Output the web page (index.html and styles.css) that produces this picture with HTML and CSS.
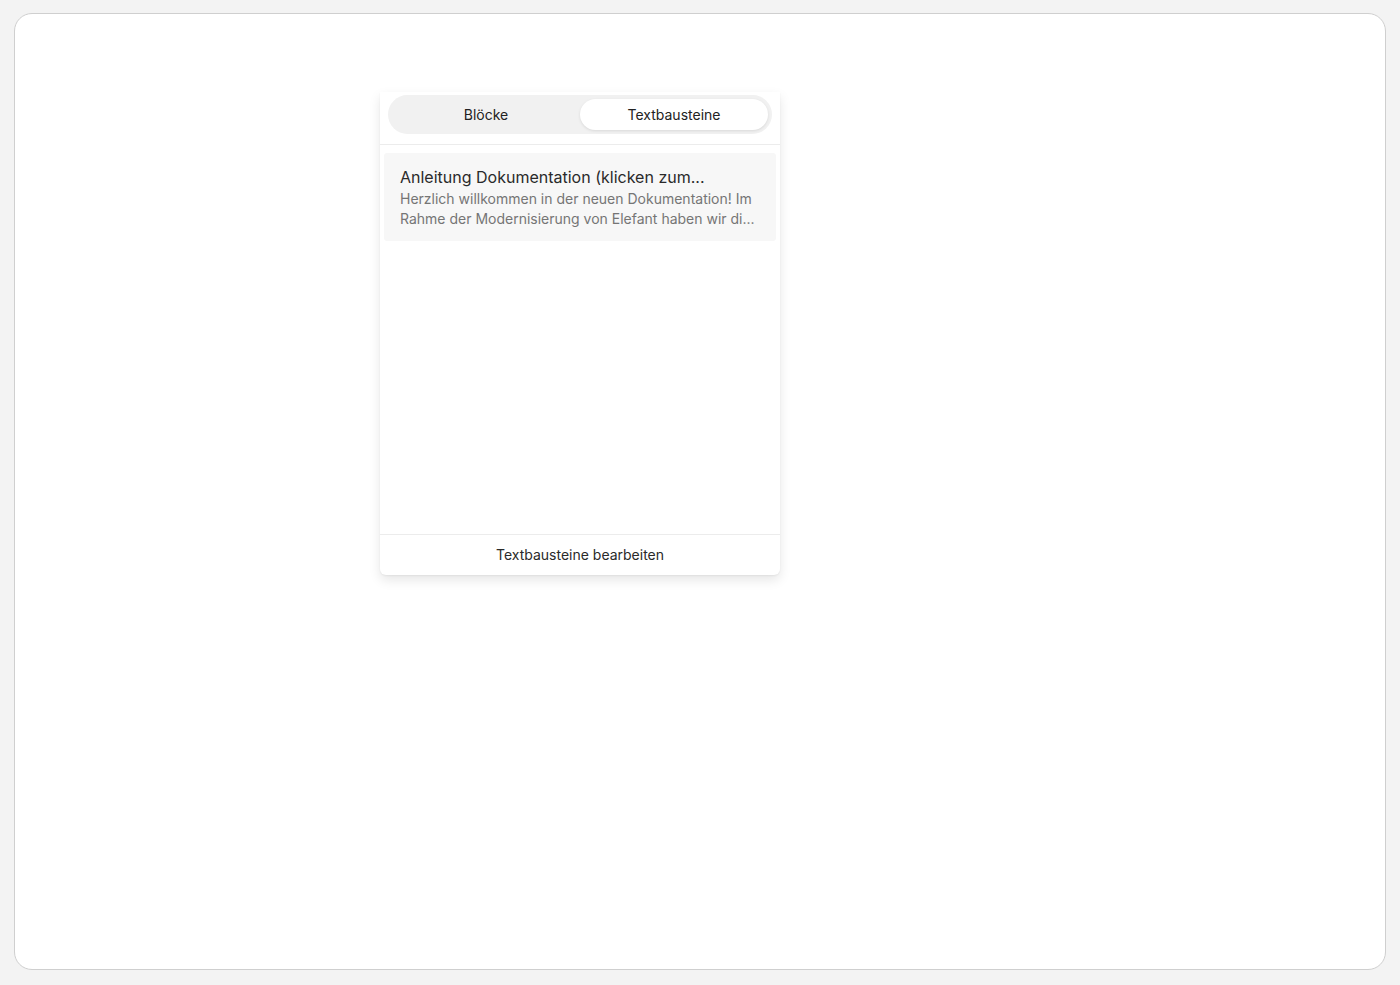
FILE: index.html
```html
<!DOCTYPE html>
<html lang="de">
<head>
<meta charset="utf-8">
<title>Textbausteine</title>
<link rel="stylesheet" href="styles.css">
</head>
<body>
<div class="frame">
  <div class="panel">
    <div class="tabs-wrap">
      <div class="tabs">
        <button class="tab">Blöcke</button>
        <button class="tab active">Textbausteine</button>
      </div>
    </div>
    <div class="list">
      <div class="item">
        <div class="item-title">Anleitung Dokumentation (klicken zum...</div>
        <div class="item-desc">Herzlich willkommen in der neuen Dokumentation! Im Rahme der Modernisierung von Elefant haben wir di...</div>
      </div>
    </div>
    <div class="footer">Textbausteine bearbeiten</div>
  </div>
</div>
</body>
</html>
```

FILE: styles.css
```css
* { box-sizing: border-box; }
html, body { margin: 0; padding: 0; }
body {
  background: #f3f3f3;
  font-family: Inter, "Noto Sans", "Liberation Sans", sans-serif;
  width: 1400px;
  height: 985px;
  overflow: hidden;
}
.frame {
  margin: 13px 14px 0 14px;
  width: 1372px;
  height: 957px;
  background: #ffffff;
  border: 1px solid #cfcfcf;
  border-radius: 18px;
  padding: 78px 0 0 365px;
}
.panel {
  width: 400px;
  height: 483px;
  background: #fff;
  border-radius: 0 0 6px 6px;
  box-shadow: 0 5px 12px rgba(0,0,0,0.10), 0 1px 2px rgba(0,0,0,0.05);
  display: flex;
  flex-direction: column;
}
.tabs-wrap {
  padding: 3px 8px 10px 8px;
  border-bottom: 1px solid #ececec;
}
.tabs {
  display: grid;
  grid-template-columns: 1fr 1fr;
  background: #f1f1f1;
  border-radius: 20px;
  padding: 4px;
  height: 39px;
}
.tab {
  border: none;
  background: transparent;
  font-family: inherit;
  font-size: 14px;
  color: #222;
  border-radius: 16px;
  cursor: pointer;
  padding: 0;
}
.tab.active {
  background: #fff;
  box-shadow: 0 1px 3px rgba(0,0,0,0.10);
}
.list {
  flex: 1;
  padding: 8px 4px;
}
.item {
  background: #f7f7f7;
  border-radius: 3px;
  padding: 12px 16px;
}
.item-title {
  font-size: 16px;
  line-height: 24px;
  color: #2a2a2a;
  white-space: nowrap;
}
.item-desc {
  font-size: 14px;
  line-height: 20px;
  color: #757575;
}
.footer {
  height: 41px;
  border-top: 1px solid #ececec;
  display: flex;
  align-items: center;
  justify-content: center;
  font-size: 14px;
  color: #2a2a2a;
  padding-bottom: 1px;
}
```
